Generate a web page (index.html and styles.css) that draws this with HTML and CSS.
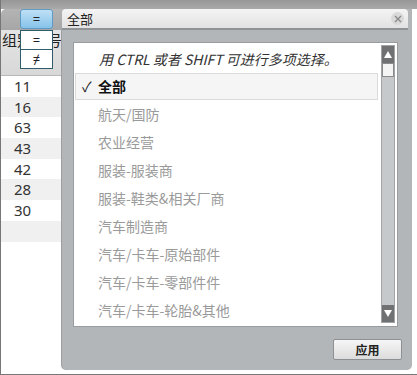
FILE: index.html
```html
<!DOCTYPE html>
<html lang="zh">
<head>
  <meta charset="UTF-8">
  <meta name="viewport" content="width=device-width, initial-scale=1.0">
  <title>筛选</title>
  <link rel="stylesheet" href="styles.css">
</head>
<body>
  <div class="frame">
    <div class="topband"></div>
    <div class="main">
      <div class="leftcol">
        <div class="toolbar">
          <button class="opbtn">=</button>
          <div class="opmenu">
            <div class="opitem">=</div>
            <div class="opitem">&ne;</div>
          </div>
        </div>
        <div class="colhead">组别编号</div>
        <div class="row">11</div>
        <div class="row alt">16</div>
        <div class="row">63</div>
        <div class="row alt">43</div>
        <div class="row">42</div>
        <div class="row alt">28</div>
        <div class="row">30</div>
        <div class="row alt"></div>
      </div>

      <div class="popup">
        <div class="search">
          <span class="search-text">全部</span>
          <span class="clear">
            <svg width="8" height="8" viewBox="0 0 8 8"><path d="M1 1L7 7M7 1L1 7" stroke="#8a8a8a" stroke-width="1.4"/></svg>
          </span>
        </div>
        <div class="body">
          <div class="listbox">
            <div class="items">
              <div class="hint">用 CTRL 或者 SHIFT 可进行多项选择。</div>
              <div class="item selected"><span class="check">&#10003;</span>全部</div>
              <div class="item">航天/国防</div>
              <div class="item">农业经营</div>
              <div class="item">服装-服装商</div>
              <div class="item">服装-鞋类&amp;相关厂商</div>
              <div class="item">汽车制造商</div>
              <div class="item">汽车/卡车-原始部件</div>
              <div class="item">汽车/卡车-零部件件</div>
              <div class="item">汽车/卡车-轮胎&amp;其他</div>
            </div>
            <div class="scrollbar">
              <div class="sb-btn">
                <svg width="8" height="7" viewBox="0 0 8 7"><path d="M4 0L8 7H0Z" fill="#fff"/></svg>
              </div>
              <div class="sb-thumb"></div>
              <div class="sb-track"></div>
              <div class="sb-btn">
                <svg width="8" height="7" viewBox="0 0 8 7"><path d="M0 0H8L4 7Z" fill="#fff"/></svg>
              </div>
            </div>
          </div>
          <div class="actions">
            <button class="apply">应用</button>
          </div>
        </div>
      </div>
    </div>
  </div>
</body>
</html>
```

FILE: styles.css
```css
body {
  margin: 0;
  font-family: "Noto Sans", "Noto Sans CJK SC", sans-serif;
  background: #fff;
}
.frame {
  width: 416px;
  height: 374px;
  border-left: 1px solid #777;
  border-bottom: 1px solid #777;
  background: #fff;
  overflow: hidden;
}
.topband {
  height: 9px;
  background: linear-gradient(#979797, #a9a9a9);
}
.main {
  display: flex;
}
.leftcol {
  width: 61px;
  background: #fff;
}
.toolbar {
  position: relative;
  height: 21px;
  background: linear-gradient(#b4b4b4, #a6a6a6);
  border-top-left-radius: 5px;
  padding-left: 19px;
}
.opbtn {
  display: block;
  width: 33px;
  height: 20px;
  margin: 0;
  padding: 0;
  border: 1px solid #5d9ac4;
  border-radius: 3px;
  background: linear-gradient(#bfe0f5, #86c3ea);
  font-family: "Noto Sans", sans-serif;
  font-size: 13px;
  line-height: 16px;
  color: #222;
}
.opmenu {
  position: absolute;
  left: 19px;
  top: 21px;
  width: 31px;
  border: 1px solid #2f5d6c;
  background: #fff;
  z-index: 2;
}
.opitem {
  height: 18px;
  line-height: 18px;
  text-align: center;
  font-size: 13px;
  color: #222;
}
.opitem + .opitem {
  border-top: 1px solid #2f5d6c;
}
.colhead {
  height: 46px;
  padding-left: 1px;
  background: linear-gradient(#e4e4e4, #d8d8d8);
  border-bottom: 1px solid #b8b8b8;
  font-family: "Noto Sans CJK SC", sans-serif;
  font-size: 15px;
  line-height: 20px;
  color: #222;
  white-space: nowrap;
  overflow: hidden;
  box-sizing: border-box;
}
.row {
  height: 20.7px;
  line-height: 20.7px;
  padding-left: 13px;
  font-size: 15px;
  color: #333;
}
.row.alt {
  background: #f0f0f0;
}
.popup {
  width: 350px;
  height: 361px;
  display: flex;
  flex-direction: column;
  background: #b3b6b9;
  border-radius: 0 0 5px 5px;
  box-shadow: -1px 0 0 #9c9fa2;
}
.search {
  height: 19px;
  margin-right: 4px;
  display: flex;
  align-items: center;
  justify-content: space-between;
  padding: 0 4px 0 5px;
  background: linear-gradient(#f4f4f4, #e2e2e2);
  border-radius: 4px 4px 0 0;
  border-bottom: 2px solid #909396;
}
.search-text {
  font-family: "Noto Sans CJK SC", sans-serif;
  font-size: 13px;
  color: #222;
}
.clear {
  width: 13px;
  height: 13px;
  border-radius: 50%;
  background: #d9d9d9;
  display: flex;
  align-items: center;
  justify-content: center;
}
.body {
  flex: 1;
  display: flex;
  flex-direction: column;
  padding: 12px 14px 10px 11px;
}
.listbox {
  height: 285px;
  display: flex;
  background: #fff;
  border: 1px solid #9a9da0;
  box-sizing: border-box;
  padding: 2px 2px 3px 1px;
}
.items {
  flex: 1;
  font-family: "Noto Sans CJK SC", sans-serif;
}
.hint {
  height: 28px;
  line-height: 28px;
  padding: 0 0 0 24px;
  font-size: 14px;
  font-style: italic;
  color: #333;
  white-space: nowrap;
}
.item {
  height: 28px;
  line-height: 28px;
  padding-left: 23px;
  font-size: 14px;
  color: #9a9a9a;
  white-space: nowrap;
}
.item.selected {
  height: 27px;
  line-height: 25px;
  border: 1px solid #dadada;
  background: #f5f5f5;
  color: #111;
  font-weight: bold;
  padding-left: 6px;
  box-sizing: border-box;
}
.check {
  display: inline-block;
  width: 16px;
  font-weight: normal;
  color: #222;
}
.scrollbar {
  width: 12px;
  margin-left: 3px;
  display: flex;
  flex-direction: column;
  background: #c6c9cc;
  border: 1px solid #a2a5a8;
}
.sb-btn {
  height: 17px;
  background: #6f7173;
  display: flex;
  align-items: center;
  justify-content: center;
}
.sb-thumb {
  height: 14px;
  background: #f4f4f4;
  border: 1px solid #8a8a8a;
  box-sizing: border-box;
}
.sb-track {
  flex: 1;
}
.actions {
  display: flex;
  justify-content: flex-end;
  margin-top: 12px;
}
.apply {
  width: 69px;
  height: 21px;
  margin-right: -4px;
  border: 1px solid #8e9194;
  border-radius: 2px;
  background: linear-gradient(#f6f6f6, #dcdcdc);
  font-family: "Noto Sans CJK SC", sans-serif;
  font-size: 12px;
  font-weight: bold;
  color: #222;
  padding: 0;
}
```
